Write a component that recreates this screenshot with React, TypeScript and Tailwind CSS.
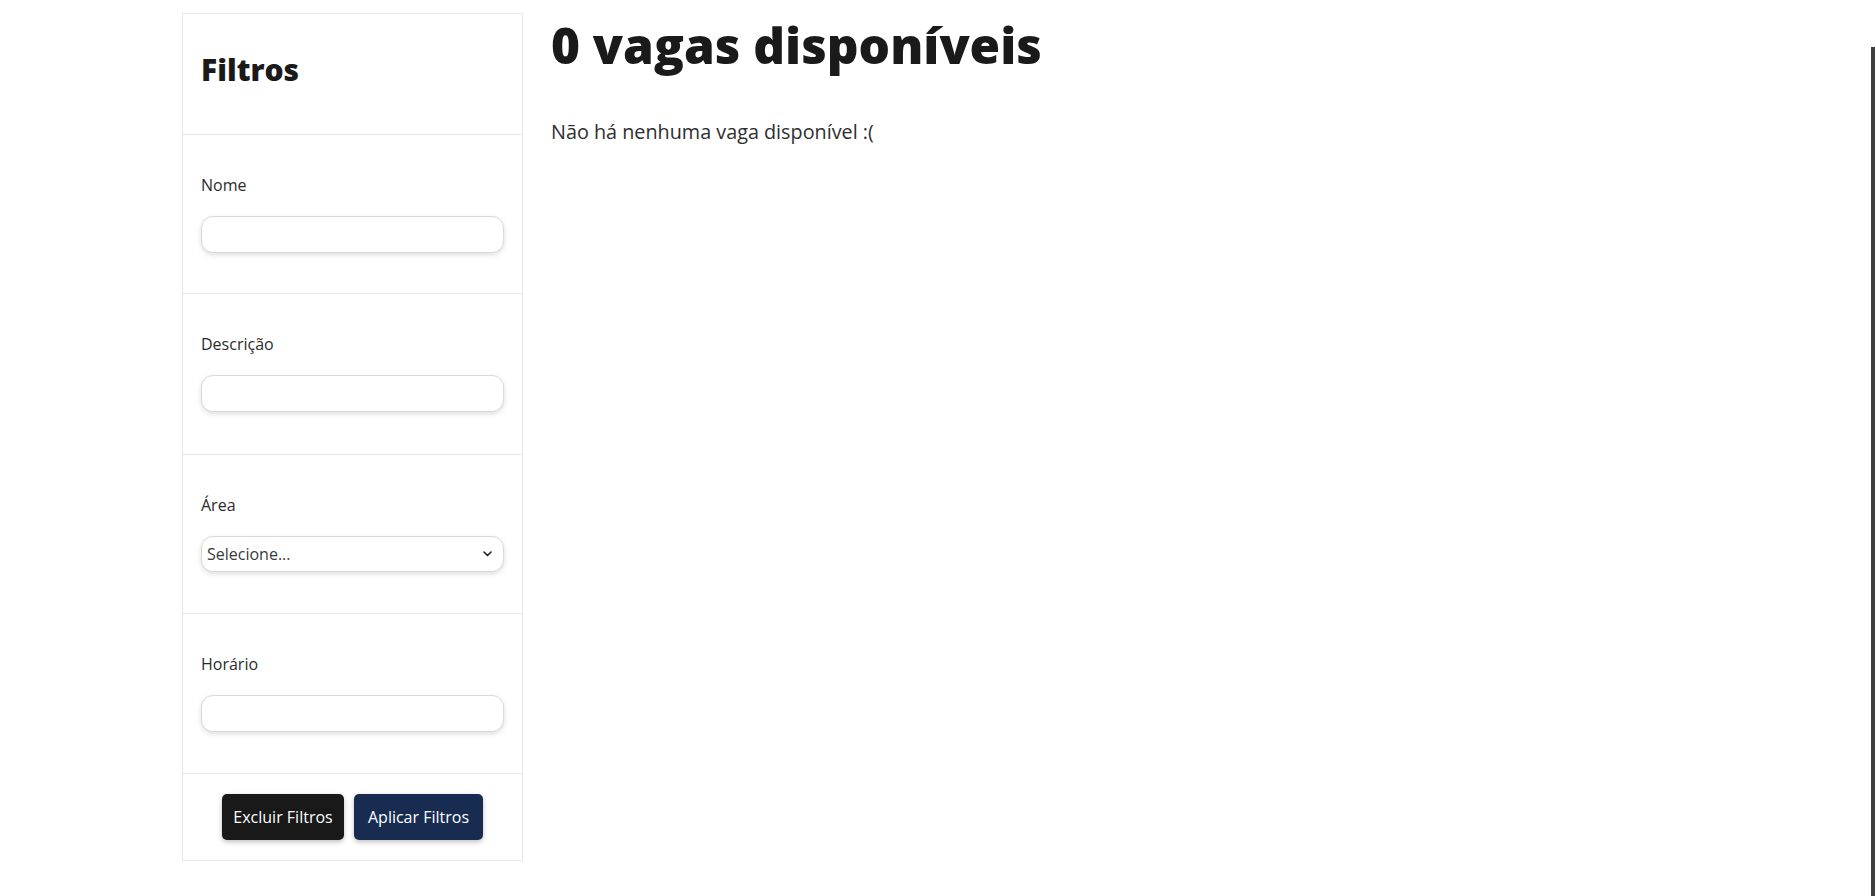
import React from "react";

const font = { fontFamily: '"Open Sans", "Noto Sans", sans-serif' };

function TextField({ label, heightClass }: { label: string; heightClass: string }) {
  return (
    <div className={`border-t border-[#e8e8e8] px-[18px] pt-[38px] ${heightClass}`}>
      <label className="block text-[16px] leading-[24px] text-[#2b2b2b]">{label}</label>
      <input
        type="text"
        className="mt-[19px] block h-[37px] w-full rounded-[12px] border border-[#d9d9d9] bg-white px-[10px] text-[16px] shadow-[0_2px_5px_rgba(0,0,0,0.13)] outline-none"
      />
    </div>
  );
}

export default function App() {
  return (
    <div className="relative min-h-screen bg-white text-[#1b1b1b]" style={font}>
      <div className="flex items-start gap-[28px] pl-[182px] pt-[13px]">
        <aside className="w-[341px] shrink-0 border border-[#e8e8e8] bg-white">
          <div className="h-[120px] pl-[18px] pt-[35px]">
            <h2 className="text-[30px] font-extrabold leading-[41px] text-[#1a1a1a]">Filtros</h2>
          </div>
          <TextField label="Nome" heightClass="h-[159px]" />
          <TextField label="Descrição" heightClass="h-[161px]" />
          <div className="h-[159px] border-t border-[#e8e8e8] px-[18px] pt-[38px]">
            <label className="block text-[16px] leading-[24px] text-[#2b2b2b]">Área</label>
            <div className="relative mt-[19px]">
              <select
                defaultValue=""
                className="block h-[36px] w-full appearance-none rounded-[12px] border border-[#d9d9d9] bg-white pl-[5px] text-[16px] text-[#3a3a3a] shadow-[0_2px_5px_rgba(0,0,0,0.13)] outline-none"
                style={font}
              >
                <option value="">Selecione...</option>
              </select>
              <svg
                className="pointer-events-none absolute right-[12px] top-[15px]"
                width="9"
                height="6"
                viewBox="0 0 9 6"
                fill="none"
              >
                <path d="M1 1l3.5 3.5L8 1" stroke="#222" strokeWidth="1.6" strokeLinecap="round" strokeLinejoin="round" />
              </svg>
            </div>
          </div>
          <TextField label="Horário" heightClass="h-[160px]" />
          <div className="flex justify-center gap-[10px] border-t border-[#e8e8e8] pb-[20px] pt-[20px]">
            <button className="h-[46px] w-[122px] rounded-[5px] bg-[#191919] text-[16px] font-medium text-white shadow-[0_2px_5px_rgba(0,0,0,0.25)]">
              Excluir Filtros
            </button>
            <button className="h-[46px] w-[129px] rounded-[5px] bg-[#182c52] text-[16px] font-medium text-white shadow-[0_2px_5px_rgba(0,0,0,0.25)]">
              Aplicar Filtros
            </button>
          </div>
        </aside>
        <main className="flex-1 pt-[6px]">
          <h1 className="text-[49.5px] font-extrabold leading-[53px] text-[#1a1a1a]">0 vagas disponíveis</h1>
          <p className="mt-[46px] text-[19.8px] leading-[28px] text-[#2e2e2e]">Não há nenhuma vaga disponível :(</p>
        </main>
      </div>
      <div className="absolute right-[1px] top-[47px] bottom-0 w-[4px] bg-[#3f3f3f]" />
    </div>
  );
}
